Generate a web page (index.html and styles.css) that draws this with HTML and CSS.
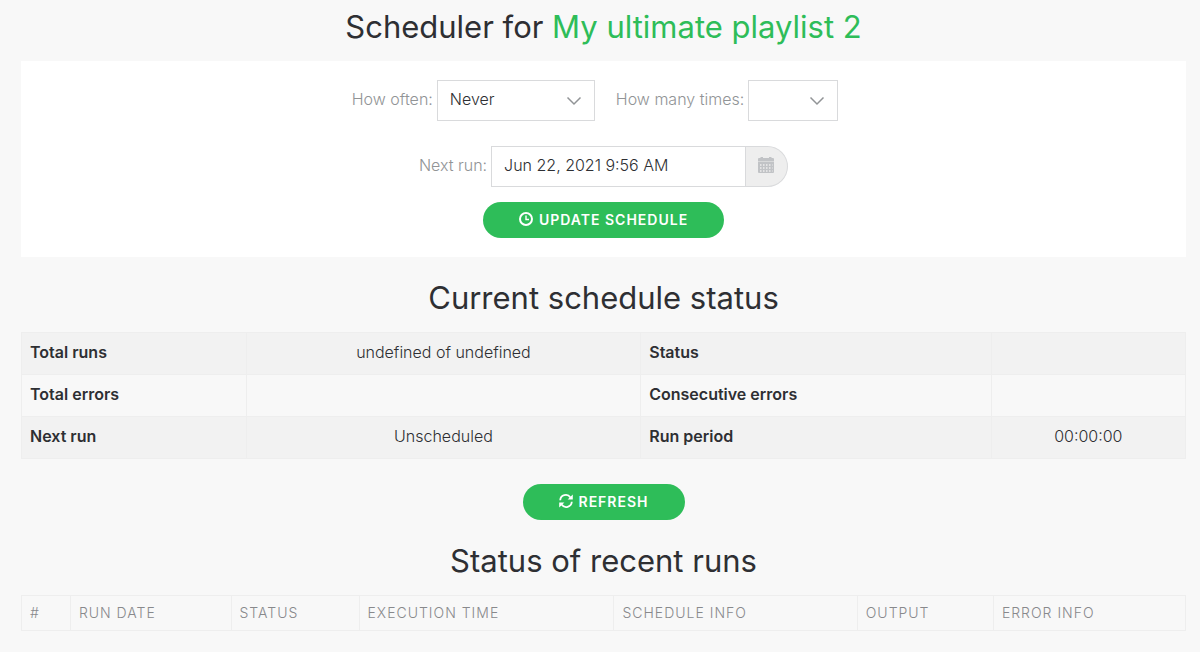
FILE: index.html
```html
<!DOCTYPE html>
<html lang="en">
<head>
	<title>Scheduler</title>
	<meta charset="utf-8"/>
	<meta name="viewport" content="width=device-width, initial-scale=1">
	<link rel="stylesheet" href="styles.css">
</head>
<body>
	<div class="container">
		<h2 class="title">Scheduler for <span class="playlist-name">My ultimate playlist 2</span></h2>

		<form class="panel">
			<div class="form-row">
				<div class="field">
					<label for="how-often">How often:</label>
					<span class="select-wrap often">
						<select id="how-often" class="form-control">
							<option selected>Never</option>
							<option>Daily</option>
							<option>Weekly</option>
						</select>
						<svg class="caret" viewBox="0 0 16 10"><path d="M1.5 1.5 L8 8 L14.5 1.5"/></svg>
					</span>
				</div>
				<div class="field">
					<label for="how-many">How many times:</label>
					<span class="select-wrap many">
						<select id="how-many" class="form-control">
							<option selected></option>
							<option>1</option>
							<option>2</option>
						</select>
						<svg class="caret" viewBox="0 0 16 10"><path d="M1.5 1.5 L8 8 L14.5 1.5"/></svg>
					</span>
				</div>
			</div>
			<div class="next-row">
				<label for="next-run">Next run:</label>
				<div class="input-group">
					<input type="text" id="next-run" class="form-control" value="Jun 22, 2021 9:56 AM">
					<button type="button" class="addon" aria-label="Pick a date">
						<svg class="calendar" viewBox="0 0 16 16">
							<path d="M2.5 0h2.5v1h6V0h2.5v1H15a1 1 0 0 1 1 1v2.4H0V2a1 1 0 0 1 1-1h1.500z"/>
							<path d="M0 5h16v10a1 1 0 0 1-1 1H1a1 1 0 0 1-1-1z"/>
							<path class="days" d="M2 8h12.500M2 11h12.500M2 14h12.500"/>
						</svg>
					</button>
				</div>
			</div>
			<button type="button" class="btn">
				<svg class="icon" viewBox="0 0 14 14"><circle cx="7" cy="7" r="6" fill="none" stroke="currentColor" stroke-width="2"/><path d="M7 3.5V7.5H10" fill="none" stroke="currentColor" stroke-width="1.4"/></svg>
				Update schedule
			</button>
		</form>

		<h2 class="title">Current schedule status</h2>
		<table class="table status-table">
			<colgroup><col class="c-name"><col class="c-value"><col class="c-name2"><col class="c-value2"></colgroup>
			<tbody>
				<tr><th scope="row">Total runs</th><td>undefined of undefined</td><th scope="row">Status</th><td></td></tr>
				<tr><th scope="row">Total errors</th><td></td><th scope="row">Consecutive errors</th><td></td></tr>
				<tr><th scope="row">Next run</th><td>Unscheduled</td><th scope="row">Run period</th><td>00:00:00</td></tr>
			</tbody>
		</table>
		<button type="button" class="btn">
			<svg class="icon" viewBox="0 0 14 14">
				<path d="M1.2 6.2A5.6 5.6 0 0 1 11.4 3.4M12.8 7.8A5.6 5.6 0 0 1 2.6 10.6" fill="none" stroke="currentColor" stroke-width="1.8"/>
				<path d="M13.8 .4V5.6H8.6zM.2 13.6V8.4H5.4z" fill="currentColor"/>
			</svg>
			Refresh
		</button>

		<h2 class="title">Status of recent runs</h2>
		<table class="table runs-table">
			<colgroup><col class="r-num"><col class="r-date"><col class="r-status"><col class="r-time"><col class="r-info"><col class="r-output"><col class="r-error"></colgroup>
			<thead>
				<tr><th>#</th><th>Run date</th><th>Status</th><th>Execution time</th><th>Schedule info</th><th>Output</th><th>Error info</th></tr>
			</thead>
		</table>
	</div>
</body>
</html>
```
FILE: styles.css
```css
*{
	box-sizing: border-box;
}

body{
	margin: 0;
	background: #f8f8f8;
	color: #2e2f33;
	font-family: Inter, "Liberation Sans", sans-serif;
	font-size: 16px;
	font-weight: 300;
	line-height: 24px;
}

.container{
	display: flex;
	flex-direction: column;
	align-items: center;
	padding: 6px 14px 20px 21px;
}

.title{
	margin: 0 0 14px;
	font-size: 31px;
	font-weight: 400;
	line-height: 41px;
	text-align: center;
}

.playlist-name{
	color: #2ebd59;
}

/* form */
.panel{
	display: flex;
	flex-direction: column;
	align-items: center;
	width: 100%;
	margin-bottom: 20px;
	padding: 19px 0;
	background: #fff;
}

.form-row{
	display: flex;
	flex-wrap: wrap;
	justify-content: center;
	margin-bottom: 25px;
}

.field{
	display: flex;
	align-items: center;
	gap: 4px;
	margin-right: 17px;
}

.field + .field{
	margin-left: 4px;
}

.next-row{
	display: flex;
	align-items: center;
	gap: 4px;
	margin-bottom: 15px;
}

label{
	padding-bottom: 4px;
	color: #919496;
}

.form-control{
	width: 100%;
	height: 41px;
	padding: 0 12px 4px;
	border: 1px solid #d9dadc;
	border-radius: 0;
	background: #fff;
	color: #2e2f33;
	font: inherit;
	appearance: none;
}

.select-wrap{
	position: relative;
}

.often{
	width: 158px;
}

.many{
	width: 90px;
}

.caret{
	position: absolute;
	right: 13px;
	top: 16px;
	width: 16px;
	height: 10px;
	fill: none;
	stroke: #919496;
	stroke-width: 1.5;
	pointer-events: none;
}

.input-group{
	display: flex;
	width: 297px;
}

.addon{
	display: flex;
	flex: none;
	align-items: center;
	justify-content: center;
	width: 42px;
	padding: 0 2px 4px 0;
	border: 1px solid #d9dadc;
	border-left: 0;
	border-radius: 0 21px 21px 0;
	background: #eee;
}

.calendar{
	width: 16px;
	height: 16px;
	fill: #c1c3c6;
}

.days{
	stroke: #eee;
	stroke-width: 1.5;
	stroke-dasharray: 1.5 1.5;
}

.btn{
	display: flex;
	align-items: center;
	gap: 6px;
	height: 36px;
	padding: 0 36px 1px;
	border: 0;
	border-radius: 18px;
	background: #2ebd59;
	color: #fff;
	font: inherit;
	font-size: 14px;
	font-weight: 600;
	letter-spacing: 1px;
	text-transform: uppercase;
}

.icon{
	width: 14px;
	height: 14px;
	margin-bottom: 2px;
}

/* tables */
.table{
	width: 100%;
	margin-bottom: 25px;
	border-collapse: collapse;
	table-layout: fixed;
}

.table th,
.table td{
	padding: 0 8px;
	border: 1px solid #eee;
	text-align: left;
}

.status-table th,
.status-table td{
	height: 42px;
	padding-bottom: 3px;
}

.status-table th{
	font-weight: 600;
}

.status-table td{
	text-align: center;
}

.status-table tr:nth-child(odd){
	background: #f2f2f2;
}

.status-table + .btn{
	margin-bottom: 20px;
}

.c-name{ width: 19.3%; }
.c-value{ width: 33.9%; }
.c-name2{ width: 30.1%; }
.c-value2{ width: 16.7%; }

.runs-table th{
	height: 35px;
	color: #88898c;
	font-size: 14px;
	font-weight: 300;
	letter-spacing: 1px;
	text-transform: uppercase;
}

.r-num{ width: 4.2%; }
.r-date{ width: 13.8%; }
.r-status{ width: 11%; }
.r-time{ width: 21.9%; }
.r-info{ width: 20.9%; }
.r-output{ width: 11.7%; }
.r-error{ width: 16.5%; }
```
